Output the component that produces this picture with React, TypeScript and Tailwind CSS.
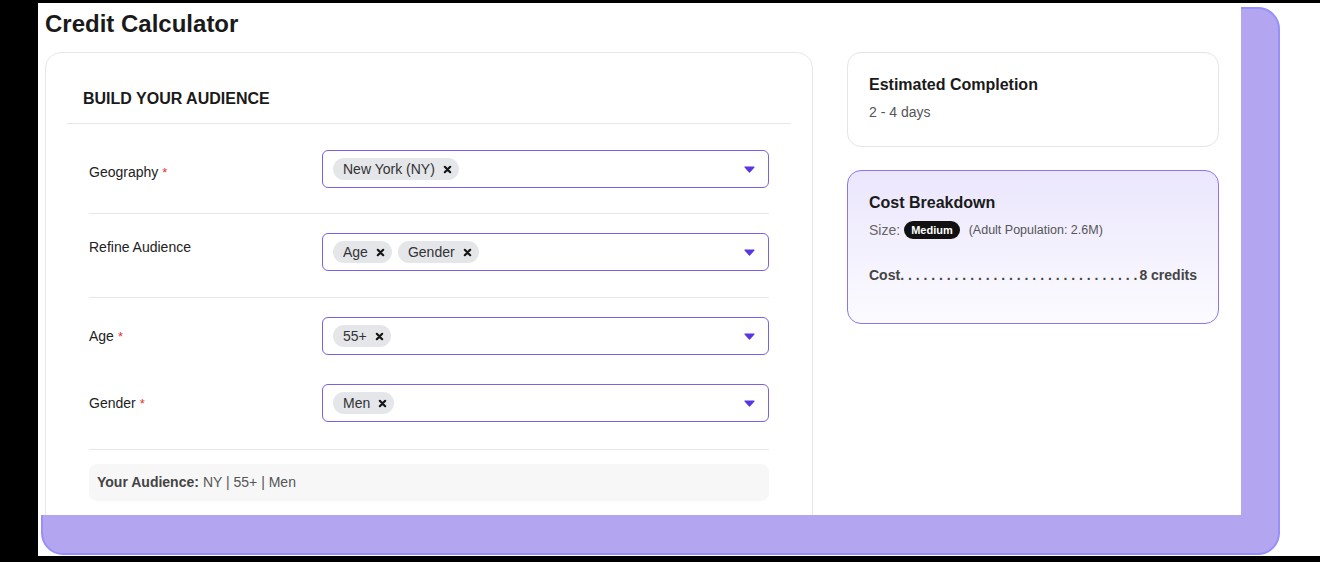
import React from 'react';

const XMark: React.FC = () => (
  <svg width="9" height="9" viewBox="0 0 10 10" className="shrink-0">
    <path d="M2 2 L8 8 M8 2 L2 8" stroke="#151515" strokeWidth="2.4" strokeLinecap="round" fill="none" />
  </svg>
);

const Caret: React.FC = () => (
  <svg width="11" height="7" viewBox="0 0 11 7" className="shrink-0">
    <path d="M1 1 H10 L5.5 6 Z" fill="#5836e0" stroke="#5836e0" strokeWidth="1.2" strokeLinejoin="round" />
  </svg>
);

const Chip: React.FC<{ label: string }> = ({ label }) => (
  <span className="flex items-center gap-[8px] h-[22px] rounded-full bg-[#e4e6ea] pl-[10px] pr-[7px] text-[14px] text-[#333]">
    {label}
    <XMark />
  </span>
);

const MultiSelect: React.FC<{ values: string[] }> = ({ values }) => (
  <div className="flex-1 h-[38px] flex items-center pl-[10px] pr-[13px] border border-[#7b5fe8] rounded-[6px] bg-white">
    <div className="flex items-center gap-[6px] flex-1">
      {values.map((v) => (
        <Chip key={v} label={v} />
      ))}
    </div>
    <Caret />
  </div>
);

interface RowProps {
  label: string;
  required?: boolean;
  values: string[];
  labelOffset: string;
  className: string;
}

const Row: React.FC<RowProps> = ({ label, required, values, labelOffset, className }) => (
  <div className={`flex items-start ${className}`}>
    <div className={`w-[233px] shrink-0 text-[14px] leading-[20px] text-[#222] ${labelOffset}`}>
      {label}
      {required && <span className="ml-[4px] text-[13px] text-[#e3342f]">*</span>}
    </div>
    <MultiSelect values={values} />
  </div>
);

export default function App() {
  const dots = Array(31).fill('.').join(' ');

  return (
    <div className="w-[1320px] h-[562px] bg-black pt-[3px] pl-[38px] overflow-hidden font-['Liberation_Sans',Arial,sans-serif]">
      <div className="relative h-[553px] bg-white">
        {/* purple backdrop behind the screenshot */}
        <div className="absolute left-[3px] top-[4px] w-[1239px] h-[548px] rounded-[22px] bg-[#b4a5f1] border-2 border-[#9590fb]" />

        <div className="relative w-[1203px] h-[512px] bg-white overflow-hidden pt-[5px] pl-[7px]">
          <h1 className="text-[24px] leading-[32px] font-bold text-[#1a1a1a]">Credit Calculator</h1>

          <div className="mt-[12px] flex items-start gap-[34px]">
            {/* Left: audience builder */}
            <div className="w-[768px] h-[500px] shrink-0 rounded-[16px] border border-[#e7e7e7] pt-[34px] px-[21px]">
              <div className="px-4 pb-[12px] border-b border-[#e6e6e6]">
                <h2 className="text-[16px] leading-[24px] font-bold text-[#1a1a1a]">BUILD YOUR AUDIENCE</h2>
              </div>

              <div className="px-[22px]">
                <Row
                  label="Geography"
                  required
                  values={['New York (NY)']}
                  labelOffset="mt-[12px]"
                  className="pt-[26px] pb-[25px] border-b border-[#e6e6e6]"
                />
                <Row
                  label="Refine Audience"
                  values={['Age', 'Gender']}
                  labelOffset="mt-[4px]"
                  className="pt-[19px] pb-[26px] border-b border-[#e6e6e6]"
                />
                <Row label="Age" required values={['55+']} labelOffset="mt-[9px]" className="pt-[19px]" />
                <Row
                  label="Gender"
                  required
                  values={['Men']}
                  labelOffset="mt-[9px]"
                  className="pt-[29px] pb-[27px] border-b border-[#e6e6e6]"
                />

                <div className="mt-[14px] h-[37px] flex items-center pl-[8px] rounded-[8px] bg-[#f7f7f7] text-[14px] text-[#555]">
                  <span className="font-bold text-[#444]">Your Audience:</span>
                  <span className="ml-[4px]">NY | 55+ | Men</span>
                </div>
              </div>
            </div>

            {/* Right: summary */}
            <div className="w-[372px] shrink-0 flex flex-col gap-[23px]">
              <div className="h-[95px] rounded-[14px] border border-[#e5e5e5] pt-[20px] px-[21px]">
                <h3 className="text-[16px] leading-[24px] font-bold text-[#1a1a1a]">Estimated Completion</h3>
                <p className="mt-[5px] text-[14px] leading-[20px] text-[#555]">2 - 4 days</p>
              </div>

              <div className="h-[154px] rounded-[14px] border border-[#8f74f0] bg-gradient-to-b from-[#ebe6fd] to-[#fcfbff] pt-[20px] px-[21px]">
                <h3 className="text-[16px] leading-[24px] font-bold text-[#1a1a1a]">Cost Breakdown</h3>
                <div className="mt-[5px] h-[20px] flex items-center">
                  <span className="text-[14px] text-[#666]">Size:</span>
                  <span className="ml-[4px] h-[18px] flex items-center rounded-full bg-[#111] px-[7px] text-[11px] font-bold text-white">
                    Medium
                  </span>
                  <span className="ml-[9px] text-[12.5px] text-[#555]">(Adult Population: 2.6M)</span>
                </div>
                <div className="mt-[25px] h-[20px] flex items-center text-[14px] font-bold text-[#444]">
                  <span>Cost</span>
                  <span className="whitespace-pre">{dots}</span>
                  <span className="ml-auto">8 credits</span>
                </div>
              </div>
            </div>
          </div>
        </div>
      </div>
    </div>
  );
}
